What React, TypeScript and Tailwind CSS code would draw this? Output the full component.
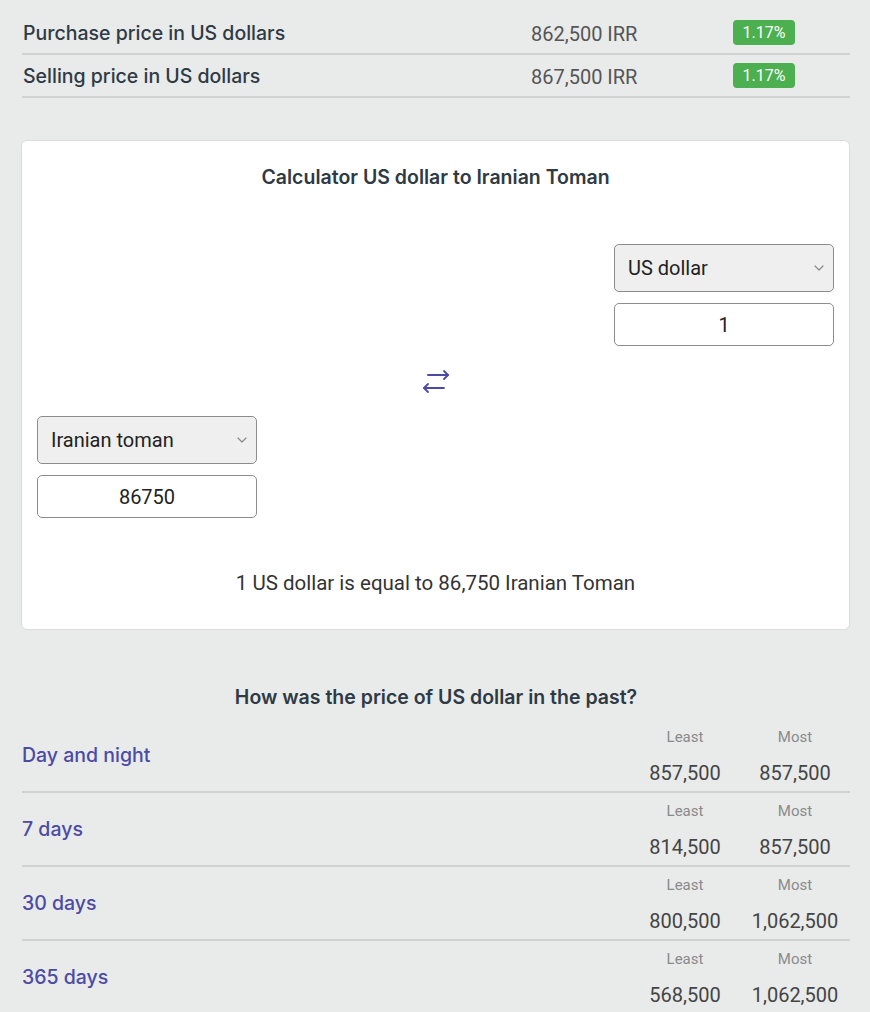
import React from 'react';

const inter = "font-['Inter','Liberation_Sans',sans-serif]";
const roboto = "font-['Roboto','Liberation_Sans',sans-serif]";

const Chevron: React.FC = () => (
    <svg width="12" height="8" viewBox="0 0 12 8" className="absolute right-[8px] top-1/2 -translate-y-1/2">
        <path d="M2 2l4 4 4-4" fill="none" stroke="#8a8a8a" strokeWidth="1.2" strokeLinecap="round" strokeLinejoin="round" />
    </svg>
);

const SwapIcon: React.FC = () => (
    <svg width="28" height="28" viewBox="0 0 28 28" fill="none" stroke="#4b4ba6" strokeWidth="1.8" strokeLinecap="round" strokeLinejoin="round">
        <path d="M6 8h20" />
        <path d="M22 4l4 4-4 4" />
        <path d="M2 21h20" />
        <path d="M6 17l-4 4 4 4" />
    </svg>
);

const Converter: React.FC<{ currency: string; amount: string }> = ({ currency, amount }) => (
    <div className={`w-[220px] flex flex-col gap-[11px] ${roboto}`}>
        <div className="relative h-[48px] rounded-[5px] border border-[#8c8c8c] bg-[#efefef] flex items-center px-[13px] text-[20px] text-[#222]">
            {currency}
            <Chevron />
        </div>
        <div className="h-[43px] rounded-[5px] border border-[#8c8c8c] bg-white flex items-center justify-center text-[20px] text-[#222]">
            {amount}
        </div>
    </div>
);

const rates = [
    { label: 'Purchase price in US dollars', value: '862,500 IRR', change: '1.17%' },
    { label: 'Selling price in US dollars', value: '867,500 IRR', change: '1.17%' },
];

const history = [
    { label: 'Day and night', least: '857,500', most: '857,500' },
    { label: '7 days', least: '814,500', most: '857,500' },
    { label: '30 days', least: '800,500', most: '1,062,500' },
    { label: '365 days', least: '568,500', most: '1,062,500' },
];

const App: React.FC = () => {
    return (
        <div className="min-h-screen w-full bg-[#e9eaea] pl-[22px] pr-[20px] pt-[12px] overflow-hidden">
            {/* Current rates */}
            <div>
                {rates.map(r => (
                    <div key={r.label} className="flex items-center h-[43px] border-b-2 border-[#d1d2d2]">
                        <div className={`flex-1 pl-px pt-[2px] text-[19.5px] font-medium text-[#2e3a44] ${inter}`}>{r.label}</div>
                        <div className={`w-[202px] pt-[2px] text-[20px] text-[#555] ${roboto}`}>{r.value}</div>
                        <div className="w-[117px]">
                            <span className={`inline-flex items-center justify-center h-[25px] w-[62px] rounded-[4px] bg-[#4caf50] text-white text-[16px] ${roboto}`}>{r.change}</span>
                        </div>
                    </div>
                ))}
            </div>

            {/* Calculator */}
            <div className="mt-[42px] -ml-px bg-white rounded-[6px] border border-[#dcdcdc] px-[15px] pt-[22px] pb-[30px]">
                <h2 className={`text-center text-[19.5px] font-semibold text-[#2e3a44] ${inter}`}>Calculator US dollar to Iranian Toman</h2>
                <div className="mt-[52px] flex justify-between h-[274px]">
                    <div className="self-end">
                        <Converter currency="Iranian toman" amount="86750" />
                    </div>
                    <div className="self-center">
                        <SwapIcon />
                    </div>
                    <div className="self-start">
                        <Converter currency="US dollar" amount="1" />
                    </div>
                </div>
                <p className={`mt-[50px] text-center text-[20.5px] text-[#333] ${roboto}`}>1 US dollar is equal to 86,750 Iranian Toman</p>
            </div>

            {/* Past prices */}
            <h2 className={`mt-[53px] text-center text-[19.5px] font-semibold text-[#2e3a44] ${inter}`}>How was the price of US dollar in the past?</h2>
            <div className="mt-[7px]">
                {history.map(h => (
                    <div key={h.label} className="flex items-center h-[74px] border-b-2 border-[#d1d2d2]">
                        <div className={`flex-1 text-[19.5px] font-medium text-[#4b4ba6] ${inter}`}>{h.label}</div>
                        <div className={`w-[220px] grid grid-cols-2 ${roboto}`}>
                            <div className="pt-[3px] text-center text-[15px] text-[#8a8a8a]">Least</div>
                            <div className="pt-[3px] text-center text-[15px] text-[#8a8a8a]">Most</div>
                            <div className="mt-[9px] text-center text-[20px] text-[#444]">{h.least}</div>
                            <div className="mt-[9px] text-center text-[20px] text-[#444]">{h.most}</div>
                        </div>
                    </div>
                ))}
            </div>
        </div>
    );
};

export default App;
